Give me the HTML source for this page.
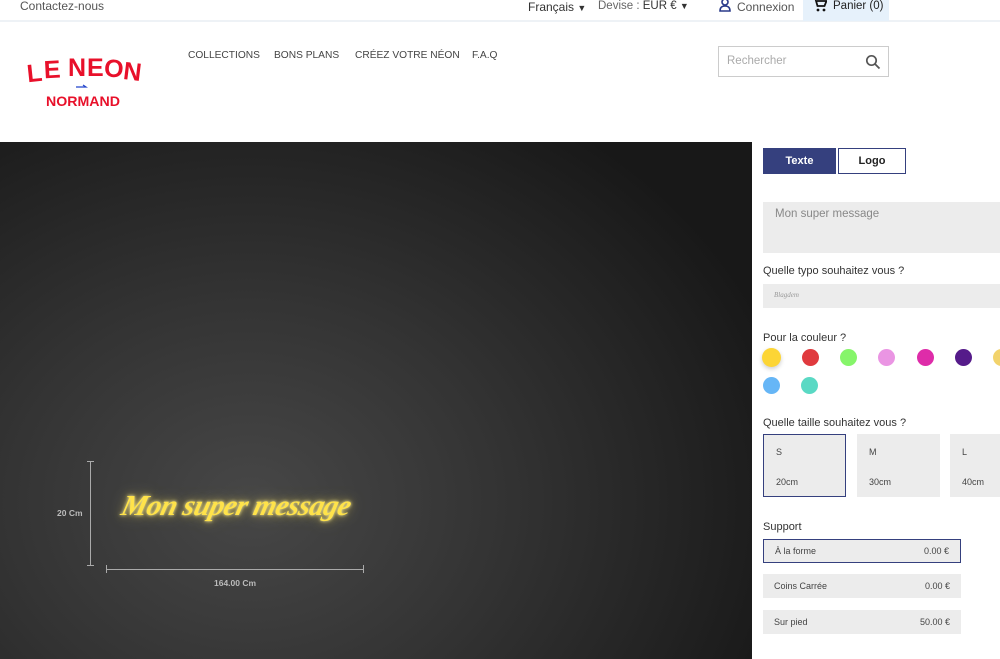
<!DOCTYPE html>
<html><head><meta charset="utf-8"><style>
*{margin:0;padding:0;box-sizing:border-box}
body{width:1000px;height:659px;overflow:hidden;background:#fff;font-family:"Liberation Sans",sans-serif;position:relative;color:#333}
.a{position:absolute;white-space:nowrap}
.top{position:absolute;left:0;top:0;width:1000px;height:22px;border-bottom:2px solid #eef2f6}
.nav{font-size:10.2px;color:#444;top:50px}
.stage{position:absolute;left:0;top:142px;width:752px;height:517px;background:radial-gradient(ellipse 560px 460px at 250px 360px,#474747 0%,#333 45%,#222 80%,#181818 100%)}
.btn{position:absolute;top:148px;height:26px;font-size:11px;font-weight:bold;text-align:center;line-height:24px}
.lbl{font-size:11px;color:#333}
.dot{position:absolute;width:17px;height:17px;border-radius:50%}
.sz{position:absolute;top:434px;width:83px;height:63px;background:#ececec;font-size:9px;color:#444}
.sz span{position:absolute;left:12px}
.sp{position:absolute;left:763px;width:198px;height:24px;background:#ececec;font-size:9px;color:#444;line-height:24px;padding:0 11px}
.sp b{font-weight:normal;float:right}
</style></head><body>
<div class="top"></div>
<div class="a" style="left:20px;top:-1px;font-size:12px;color:#555">Contactez-nous</div>
<div class="a" style="left:528px;top:0px;font-size:12px;color:#333">Français <span style="font-size:9px">▼</span></div>
<div class="a" style="left:598px;top:0px;font-size:11.5px;color:#666">Devise : <span style="color:#333">EUR € <span style="font-size:9px">▼</span></span></div>
<svg class="a" style="left:718px;top:-2px" width="14" height="14" viewBox="0 0 14 14"><circle cx="7" cy="4" r="3" fill="none" stroke="#2a3a8a" stroke-width="1.6"/><path d="M2 13 Q2 8 7 8 Q12 8 12 13Z" fill="none" stroke="#2a3a8a" stroke-width="1.6"/></svg>
<div class="a" style="left:737px;top:0px;font-size:12px;color:#555">Connexion</div>
<div class="a" style="left:803px;top:0;width:86px;height:21px;background:#e6f1fb"></div>
<svg class="a" style="left:813px;top:-2px" width="14" height="14" viewBox="0 0 14 14"><path d="M0 1h2.5l2 7h7l2-5H4" fill="none" stroke="#111" stroke-width="1.8"/><circle cx="5" cy="12" r="1.4" fill="#111"/><circle cx="11" cy="12" r="1.4" fill="#111"/></svg>
<div class="a" style="left:833px;top:0px;font-size:11.5px;color:#222">Panier (0)</div>

<svg class="a" style="left:24px;top:55px" width="120" height="56" viewBox="0 0 120 56" font-family="Liberation Sans" font-weight="bold" fill="#e8102a">
<text x="3" y="26" font-size="25" transform="rotate(-6 15 20)">L</text>
<text x="20" y="23" font-size="25" transform="rotate(-3 28 18)">E</text>
<text x="44" y="21" font-size="25">N</text>
<text x="63" y="21" font-size="25">E</text>
<text x="80" y="22" font-size="25" transform="rotate(3 90 18)">O</text>
<text x="99" y="25" font-size="25" transform="rotate(7 108 20)">N</text>
<path d="M52 32h10l-3 -2" stroke="#2244cc" stroke-width="1.2" fill="none"/>
<text x="59" y="51" text-anchor="middle" font-size="14" textLength="74" lengthAdjust="spacingAndGlyphs">NORMAND</text>
</svg>
<div class="a nav" style="left:188px">COLLECTIONS</div>
<div class="a nav" style="left:274px">BONS PLANS</div>
<div class="a nav" style="left:355px">CRÉEZ VOTRE NÉON</div>
<div class="a nav" style="left:472px">F.A.Q</div>
<div class="a" style="left:718px;top:46px;width:171px;height:31px;border:1px solid #ccc"></div>
<div class="a" style="left:727px;top:55px;font-size:11.5px;color:#aaa">Rechercher</div>
<svg class="a" style="left:865px;top:54px" width="16" height="16" viewBox="0 0 16 16"><circle cx="6.5" cy="6.5" r="4.7" fill="none" stroke="#555" stroke-width="1.7"/><path d="M10 10l4.5 4.5" stroke="#555" stroke-width="1.8"/></svg>

<div class="stage"></div>
<div class="a" style="left:90px;top:461px;width:1px;height:105px;background:#aaa"></div>
<div class="a" style="left:87px;top:461px;width:7px;height:1px;background:#aaa"></div>
<div class="a" style="left:87px;top:565px;width:7px;height:1px;background:#aaa"></div>
<div class="a" style="left:106px;top:569px;width:258px;height:1px;background:#aaa"></div>
<div class="a" style="left:106px;top:565px;width:1px;height:8px;background:#aaa"></div>
<div class="a" style="left:363px;top:565px;width:1px;height:8px;background:#aaa"></div>
<div class="a" style="left:57px;top:508px;font-size:8.5px;font-weight:bold;color:#bbb">20 Cm</div>
<div class="a" style="left:214px;top:578px;font-size:8.5px;font-weight:bold;color:#bbb">164.00 Cm</div>
<div class="a" style="left:122px;top:490px;font-family:'Liberation Serif',serif;font-style:italic;font-weight:bold;font-size:29px;color:#ffe34a;letter-spacing:-0.5px;transform:skewX(-14deg);text-shadow:0 0 3px #fff3a0,0 0 8px rgba(255,220,60,.6),0 0 16px rgba(230,220,150,.4)">Mon super message</div>

<div class="btn" style="left:763px;width:73px;background:#35407e;color:#fff;border:1px solid #35407e">Texte</div>
<div class="btn" style="left:838px;width:68px;border:1px solid #35407e;color:#222">Logo</div>
<div class="a" style="left:763px;top:202px;width:237px;height:51px;background:#ececec"></div>
<div class="a" style="left:775px;top:208px;font-size:11.5px;color:#888">Mon super message</div>
<div class="a lbl" style="left:763px;top:265px">Quelle typo souhaitez vous ?</div>
<div class="a" style="left:763px;top:284px;width:237px;height:24px;background:#ececec"></div>
<div class="a" style="left:774px;top:291px;font-size:7px;font-style:italic;color:#999;font-family:'Liberation Serif',serif">Blagdem</div>
<div class="a lbl" style="left:763px;top:332px">Pour la couleur ?</div>
<div class="dot" style="left:762px;top:348px;width:19px;height:19px;background:#fcd535;box-shadow:0 2px 5px rgba(0,0,0,.2)"></div>
<div class="dot" style="left:802px;top:349px;background:#e03a3e"></div>
<div class="dot" style="left:840px;top:349px;background:#86f56a"></div>
<div class="dot" style="left:878px;top:349px;background:#ea95e3"></div>
<div class="dot" style="left:917px;top:349px;background:#de2ca9"></div>
<div class="dot" style="left:955px;top:349px;background:#551b8a"></div>
<div class="dot" style="left:993px;top:349px;background:#f2d36c"></div>
<div class="dot" style="left:763px;top:377px;background:#66b6f6"></div>
<div class="dot" style="left:801px;top:377px;background:#5ad9c4"></div>
<div class="a lbl" style="left:763px;top:417px">Quelle taille souhaitez vous ?</div>
<div class="sz" style="left:763px;border:1px solid #35407e"><span style="top:12px">S</span><span style="top:42px">20cm</span></div>
<div class="sz" style="left:857px"><span style="top:13px">M</span><span style="top:43px">30cm</span></div>
<div class="sz" style="left:950px"><span style="top:13px">L</span><span style="top:43px">40cm</span></div>
<div class="a lbl" style="left:763px;top:521px">Support</div>
<div class="sp" style="top:539px;border:1px solid #35407e;line-height:22px">À la forme<b>0.00 €</b></div>
<div class="sp" style="top:574px">Coins Carrée<b>0.00 €</b></div>
<div class="sp" style="top:610px">Sur pied<b>50.00 €</b></div>
</body></html>
